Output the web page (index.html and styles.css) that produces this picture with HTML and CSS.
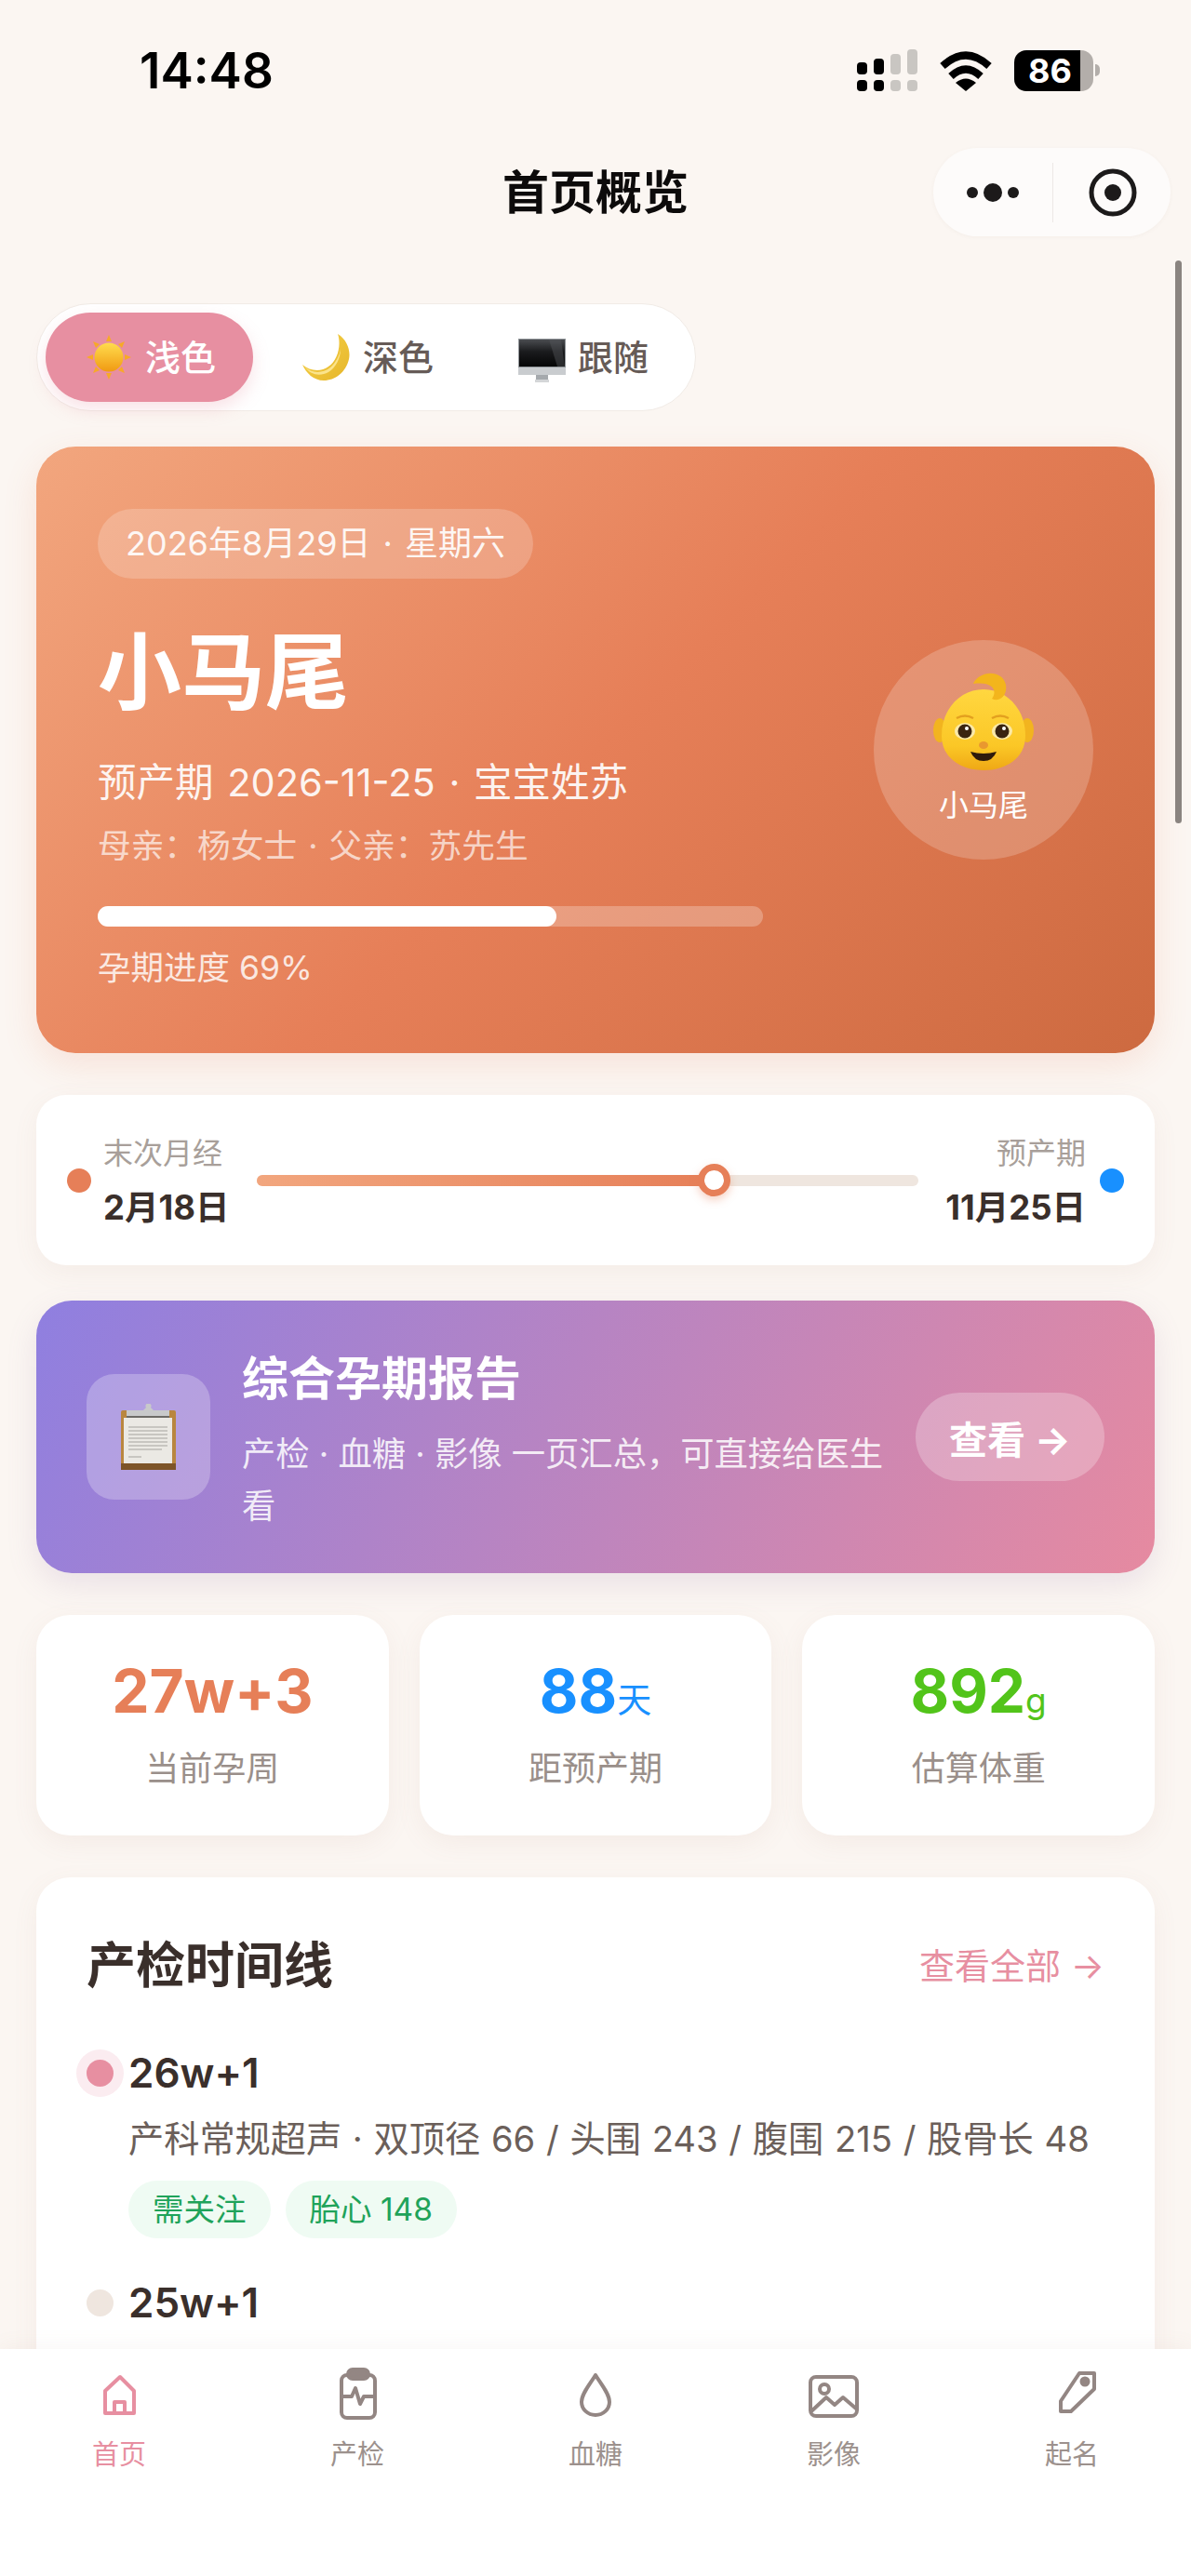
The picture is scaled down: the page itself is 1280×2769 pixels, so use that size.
FILE: index.html
```html
<!DOCTYPE html>
<html lang="zh-CN">
<head>
<meta charset="utf-8">
<title>首页概览</title>
<link rel="stylesheet" href="styles.css">
</head>
<body>
<div class="phone">
  <header class="status">
    <span class="time">14:48</span>
    <div class="status-icons">
      <svg class="cell" viewBox="0 0 65 45" width="65" height="45">
        <g class="on"><rect x="0" y="14" width="11" height="13" rx="4"/><rect x="18" y="10" width="11" height="17" rx="4"/><rect x="0" y="33" width="11" height="12" rx="4"/><rect x="18" y="33" width="11" height="12" rx="4"/></g>
        <g class="off"><rect x="36" y="5" width="11" height="22" rx="4"/><rect x="54" y="0" width="11" height="27" rx="4"/><rect x="36" y="33" width="11" height="12" rx="4"/><rect x="54" y="33" width="11" height="12" rx="4"/></g>
      </svg>
      <svg class="wifi" viewBox="0 0 58 44" width="58" height="44">
        <path class="wifi-arc" d="M4 17Q29 -6 54 17"/>
        <path class="wifi-arc" d="M13 28Q29 13 45 28"/>
        <path class="wifi-dot" d="M18 35Q29 26 40 35L29 44Z"/>
      </svg>
      <div class="battery"><span class="battery-num">86</span></div>
      <span class="battery-nub"></span>
    </div>
  </header>

  <nav class="nav">
    <h1 class="nav-title">首页概览</h1>
    <div class="capsule">
      <svg class="cap-more" viewBox="0 0 58 24" width="58" height="24"><circle cx="6" cy="12" r="6"/><circle cx="28" cy="12" r="10"/><circle cx="50" cy="12" r="6"/></svg>
      <span class="cap-line"></span>
      <svg class="cap-target" viewBox="0 0 52 52" width="52" height="52"><circle class="ring" cx="26" cy="26" r="23"/><circle cx="26" cy="26" r="9"/></svg>
    </div>
  </nav>

  <main class="main">
    <div class="toggle">
      <div class="toggle-item active">
        <svg class="emoji" viewBox="0 0 50 50" width="50" height="50">
          <defs><linearGradient id="sunG" x1="0" y1="0" x2="0" y2="1"><stop offset="0" stop-color="#ffdc4e"/><stop offset="1" stop-color="#f09a12"/></linearGradient></defs>
          <g class="sun-rays"><path d="M25 1l3 7h-6z"/><path d="M25 49l3-7h-6z"/><path d="M1 25l7-3v6z"/><path d="M49 25l-7-3v6z"/><path d="M8 8l7 3-4 4z"/><path d="M42 8l-7 3 4 4z"/><path d="M8 42l7-3-4-4z"/><path d="M42 42l-7-3 4-4z"/></g>
          <circle cx="25" cy="25" r="15.500" fill="url(#sunG)"/>
        </svg>
        <span>浅色</span>
      </div>
      <div class="toggle-item">
        <svg class="emoji" viewBox="0 0 51 50" width="51" height="50">
          <defs><linearGradient id="moonG" x1="0" y1="0" x2="1" y2="1"><stop offset="0" stop-color="#f6d24a"/><stop offset="1" stop-color="#e6b62a"/></linearGradient></defs>
          <path d="M38 0C48 6 52 18 50 27 47 41 35 50 23 50 12 50 4 42 0 33 8 40 20 41 28 35 38 28 42 12 38 0Z" fill="url(#moonG)"/>
          <path d="M3 36C10 42 21 43 30 36 36 31 40 23 41 16 41 26 36 36 28 41 19 46 9 44 3 36Z" fill="#fbe48c"/>
        </svg>
        <span>深色</span>
      </div>
      <div class="toggle-item">
        <svg class="emoji monitor" viewBox="0 0 51 47" width="51" height="47">
          <defs><linearGradient id="scrG" x1="0" y1="0" x2="0" y2="1"><stop offset="0" stop-color="#4a4c50"/><stop offset="0.450" stop-color="#1a1b1d"/><stop offset="1" stop-color="#050505"/></linearGradient></defs>
          <rect x="0" y="0" width="51" height="31" fill="#8f9397"/>
          <rect x="1" y="1" width="49" height="29" fill="url(#scrG)"/>
          <path d="M33 1H46L50 30H42Z" fill="#54565a" opacity=".45"/>
          <rect x="0" y="31" width="51" height="8" fill="#c9cccf"/>
          <rect x="19" y="39" width="13" height="5" fill="#a5a9ad"/>
          <rect x="18" y="44" width="15" height="3" fill="#d4d6d8"/>
        </svg>
        <span>跟随</span>
      </div>
    </div>

    <section class="hero">
      <div class="hero-left">
        <div class="date-pill">2026年8月29日 · 星期六</div>
        <div class="hero-name">小马尾</div>
        <div class="hero-due">预产期 2026-11-25 · 宝宝姓苏</div>
        <div class="hero-parents">母亲：杨女士 · 父亲：苏先生</div>
        <div class="hero-bar"><div class="hero-fill"></div></div>
        <div class="hero-progress">孕期进度 69%</div>
      </div>
      <div class="avatar">
        <svg class="baby" viewBox="0 0 108 106" width="108" height="106">
          <defs>
            <linearGradient id="babyG" x1="0" y1="0" x2="0" y2="1"><stop offset="0" stop-color="#ffd740"/><stop offset="0.700" stop-color="#fbc726"/><stop offset="1" stop-color="#efa815"/></linearGradient>
          </defs>
          <ellipse cx="7" cy="62" rx="7" ry="13" fill="#f2b41f"/>
          <ellipse cx="101" cy="62" rx="7" ry="13" fill="#f2b41f"/>
          <path d="M54 18C78 18 99 38 99 68 99 92 78 105 54 105 30 105 9 92 9 68 9 38 30 18 54 18Z" fill="url(#babyG)"/>
          <path d="M43 12C49 -2 74 -4 78 13 80 26 70 32 63 28 69 20 65 9 43 12Z" fill="#f3b51c"/>
          <path d="M25 49q9-5 18 0M63 49q9-5 18 0" class="baby-brow"/>
          <ellipse cx="34" cy="63" rx="11" ry="9" fill="#fbe9a8"/>
          <ellipse cx="74" cy="63" rx="11" ry="9" fill="#fbe9a8"/>
          <circle cx="34" cy="63" r="7.500" fill="#3a2410"/>
          <circle cx="74" cy="63" r="7.500" fill="#3a2410"/>
          <circle cx="36" cy="60" r="2" fill="#fff"/>
          <circle cx="76" cy="60" r="2" fill="#fff"/>
          <ellipse cx="54" cy="78" rx="5" ry="4" fill="#e9982f"/>
          <path d="M40 85Q54 89 68 85 64 95 54 95 44 95 40 85Z" fill="#2f1a0c"/>
        </svg>
        <span class="avatar-name">小马尾</span>
      </div>
    </section>

    <section class="span-card">
      <i class="dot dot-start"></i>
      <div class="span-label">
        <span class="span-cap">末次月经</span>
        <b class="span-date">2月18日</b>
      </div>
      <div class="track"><div class="track-fill"></div><span class="thumb"></span></div>
      <div class="span-label end">
        <span class="span-cap">预产期</span>
        <b class="span-date">11月25日</b>
      </div>
      <i class="dot dot-end"></i>
    </section>

    <section class="report">
      <div class="report-icon">
        <svg viewBox="0 0 62 72" width="62" height="72">
          <rect x="1" y="7" width="59" height="64" rx="2" fill="#b9863f"/>
          <rect x="4" y="15" width="52" height="49" fill="#ebe9e4"/>
          <path d="M9 25h42M9 29h42M9 33h42M9 37h42M9 41h42M9 45h42M9 49h36M9 57h14" class="clip-lines"/>
          <rect x="1" y="64" width="59" height="7" fill="#7d5428"/>
          <rect x="7" y="7" width="46" height="6" fill="#c8c9ca"/>
          <rect x="7" y="13" width="46" height="2" fill="#6c6a66"/>
          <path d="M24 8L28 4a3 3 0 1 1 5 0L37 8Z" fill="#c8c9ca"/>
        </svg>
      </div>
      <div class="report-text">
        <h2 class="report-title">综合孕期报告</h2>
        <p class="report-sub">产检 · 血糖 · 影像 一页汇总，可直接给医生看</p>
      </div>
      <div class="report-btn">查看 →</div>
    </section>

    <section class="stats">
      <div class="stat"><div class="stat-val orange">27w+3</div><div class="stat-label">当前孕周</div></div>
      <div class="stat"><div class="stat-val blue">88<small>天</small></div><div class="stat-label">距预产期</div></div>
      <div class="stat"><div class="stat-val green">892<small>g</small></div><div class="stat-label">估算体重</div></div>
    </section>

    <section class="visits">
      <div class="visits-head">
        <h2 class="visits-title">产检时间线</h2>
        <span class="visits-more">查看全部 →</span>
      </div>
      <div class="visit">
        <div class="visit-top"><i class="visit-dot current"></i><b class="visit-week">26w+1</b></div>
        <p class="visit-desc">产科常规超声 · 双顶径 66 / 头围 243 / 腹围 215 / 股骨长 48</p>
        <div class="tags"><span class="tag">需关注</span><span class="tag">胎心 148</span></div>
      </div>
      <div class="visit second">
        <div class="visit-top"><i class="visit-dot"></i><b class="visit-week">25w+1</b></div>
      </div>
    </section>
  </main>

  <div class="scrollbar"></div>

  <footer class="tabbar">
    <div class="tab active">
      <svg viewBox="0 0 60 60" width="60" height="60"><path d="M15 50V26L31 11l15 15v24zM25 50V38h11v12"/></svg>
      <span>首页</span>
    </div>
    <div class="tab">
      <svg viewBox="0 0 60 60" width="60" height="60"><rect x="13" y="9" width="36" height="46" rx="6"/><rect class="solid" x="20" y="3" width="22" height="10" rx="5"/><path d="M14 32h10l4-9 5 17 4-8h11"/></svg>
      <span>产检</span>
    </div>
    <div class="tab">
      <svg viewBox="0 0 60 60" width="60" height="60"><path d="M30 9C24 19 15 29 15 38a15 14 0 0 0 30 0C45 29 36 19 30 9Z"/></svg>
      <span>血糖</span>
    </div>
    <div class="tab">
      <svg viewBox="0 0 60 60" width="60" height="60"><rect x="5" y="11" width="50" height="42" rx="6"/><circle cx="20" cy="24" r="5"/><path d="M7 47l15-14 9 8 9-8 14 12"/></svg>
      <span>影像</span>
    </div>
    <div class="tab">
      <svg viewBox="0 0 60 60" width="60" height="60"><path d="M38 7H54V24L29 48H18V37Z"/><circle class="solid" cx="44" cy="16" r="3.500"/></svg>
      <span>起名</span>
    </div>
  </footer>
</div>
</body>
</html>
```

FILE: styles.css
```css
* { box-sizing: border-box; margin: 0; padding: 0; }
html, body { width: 1280px; height: 2769px; overflow: hidden; }
body {
  background: #fbf6f2;
  color: #3a2f2b;
  font-family: Inter, "Noto Sans CJK SC", sans-serif;
}
.phone { position: relative; width: 1280px; height: 2769px; overflow: hidden; display: flex; flex-direction: column; }

/* status bar */
.status { height: 152px; padding: 53px 0 0 150px; display: flex; justify-content: space-between; align-items: flex-start; flex: none; }
.time { font-size: 53px; line-height: 46px; font-weight: 600; color: #000; }
.status-icons { display: flex; align-items: center; margin-right: 98px; }
.cell .on { fill: #000; }
.cell .off { fill: #c9c6c2; }
.wifi { margin-left: 23px; }
.wifi-arc { fill: none; stroke: #000; stroke-width: 8; }
.wifi-dot { fill: #000; }
.battery {
  width: 85px; height: 44px; margin-left: 23px; border-radius: 13px;
  background: linear-gradient(90deg, #000 0 84%, #b3aeaa 84% 100%);
  color: #fff; font-size: 36px; font-weight: 700; line-height: 44px; padding-left: 15px;
}
.battery-nub { width: 5px; height: 13px; margin-left: 2px; background: #b3aeaa; border-radius: 0 6px 6px 0; }

/* nav */
.nav { position: relative; height: 110px; flex: none; display: flex; align-items: center; justify-content: center; }
.nav-title { font-size: 50px; font-weight: 700; color: #0d0b0b; line-height: 60px; }
.capsule {
  position: absolute; left: 1003px; top: 7px; width: 255px; height: 95px; border-radius: 48px;
  background: #fdfbfa; box-shadow: 0 1px 4px rgba(120, 90, 70, .05);
  display: flex; align-items: center; padding-left: 36px;
}
.cap-more { fill: #1c1a1a; }
.cap-line { width: 1px; height: 64px; margin-left: 34px; background: #ece8e5; }
.cap-target { margin-left: 38px; fill: #1c1a1a; }
.cap-target .ring { fill: none; stroke: #1c1a1a; stroke-width: 5; }

/* main */
.main { flex: 1; min-height: 0; padding: 64px 39px 0; display: flex; flex-direction: column; }

.toggle {
  align-self: flex-start; width: 709px; height: 116px; border-radius: 58px; padding: 9px;
  background: #fff; border: 1px solid #f1ebe6; display: flex; align-items: center; flex: none;
}
.toggle-item {
  height: 96px; width: 230px; border-radius: 48px; display: flex; align-items: center; gap: 14px;
  font-size: 38px; font-weight: 500; color: #665b57; padding-left: 53px; flex: none;
}
.toggle-item span { margin-bottom: 6px; }
.toggle-item.active { width: 223px; color: #fff; background: #e78fa1; box-shadow: 0 8px 18px rgba(231, 143, 161, .25); padding-left: 43px; }
.emoji { flex: none; }
.monitor { margin-top: 7px; }
.sun-rays { fill: #f7a928; }
.toggle-item:last-child { gap: 13px; padding-left: 55px; }

/* hero */
.hero {
  margin-top: 38px; height: 652px; border-radius: 42px; padding: 66px 66px; flex: none;
  display: flex; justify-content: space-between; align-items: center; color: #fff;
  background: linear-gradient(135deg, #f2a67e 0%, #e67f58 50%, #cd6a40 100%);
  box-shadow: 0 12px 36px rgba(230, 127, 88, .16);
}
.hero-left { width: 715px; }
.date-pill {
  display: inline-block; height: 75px; line-height: 75px; padding: 0 30px; border-radius: 38px;
  background: rgba(255, 255, 255, .2); font-size: 36px; word-spacing: 3px; color: rgba(255, 255, 255, .92);
}
.hero-name { margin-top: 51px; font-size: 90px; line-height: 100px; font-weight: 700; }
.hero-due { margin-top: 40px; font-size: 41.500px; word-spacing: 3px; line-height: 56px; color: rgba(255, 255, 255, .92); }
.hero-parents { margin-top: 16px; font-size: 35.700px; word-spacing: 2px; line-height: 48px; color: rgba(255, 255, 255, .68); }
.hero-bar { margin-top: 41px; height: 22px; border-radius: 11px; background: rgba(255, 255, 255, .26); }
.hero-fill { width: 69%; height: 100%; border-radius: 11px; background: #fff; }
.hero-progress { margin-top: 21px; font-size: 35.500px; line-height: 48px; color: rgba(255, 255, 255, .82); }
.avatar {
  width: 236px; height: 236px; border-radius: 50%; background: rgba(255, 255, 255, .2); flex: none;
  display: flex; flex-direction: column; align-items: center; padding-top: 35px;
}
.baby-brow { fill: none; stroke: #e3a01f; stroke-width: 2.500; }
.avatar-name { margin-top: 15px; font-size: 32px; line-height: 44px; color: #fff; }

/* span card */
.span-card {
  margin-top: 45px; height: 183px; border-radius: 32px; background: #fff; padding: 0 33px; flex: none;
  display: flex; align-items: center; box-shadow: 0 8px 28px rgba(160, 120, 100, .07);
}
.dot { width: 26px; height: 26px; border-radius: 50%; flex: none; }
.dot-start { background: #e67f58; }
.dot-end { background: #1890ff; }
.span-label { margin-left: 13px; display: flex; flex-direction: column; gap: 8px; flex: none; }
.span-label.end { margin: 0 15px 0 0; align-items: flex-end; }
.span-cap { font-size: 32px; line-height: 50px; color: #a89f9a; }
.span-date { font-size: 36.500px; line-height: 50px; font-weight: 700; color: #3a2f2b; }
.track { position: relative; flex: 1; height: 12px; margin: 0 29px 0 29px; border-radius: 6px; background: #efe6df; }
.track-fill { width: 69%; height: 100%; border-radius: 6px; background: linear-gradient(90deg, #f2a67e, #e67f58); }
.thumb {
  position: absolute; left: 69%; top: 50%; width: 35px; height: 35px; margin: -18px 0 0 -17px;
  border-radius: 50%; background: #fff; border: 7px solid #e67f58; box-shadow: 0 4px 10px rgba(230, 127, 88, .35);
}

/* report */
.report {
  margin-top: 38px; height: 293px; border-radius: 38px; padding: 0 54px 0 54px; flex: none; color: #fff;
  display: flex; align-items: center;
  background: linear-gradient(118deg, #8f7fe0 0%, #e68aa0 100%);
  box-shadow: 0 12px 32px rgba(150, 120, 170, .16);
}
.report-icon {
  width: 133px; height: 135px; border-radius: 30px; background: rgba(255, 255, 255, .25); flex: none;
  display: flex; align-items: center; justify-content: center;
}
.clip-lines { stroke: #bdbab5; stroke-width: 1.500; fill: none; }
.report-text { width: 697px; margin-left: 34px; padding-top: 5px; flex: none; }
.report-title { font-size: 50px; line-height: 70px; font-weight: 700; }
.report-sub { margin-top: 18px; font-size: 36.300px; line-height: 56px; color: rgba(255, 255, 255, .86); }
.report-btn {
  margin-left: auto; width: 203px; height: 95px; border-radius: 48px; background: rgba(255, 255, 255, .25);
  display: flex; align-items: center; justify-content: center; font-size: 41px; font-weight: 700; flex: none;
}

/* stats */
.stats { margin-top: 45px; height: 237px; display: grid; grid-template-columns: repeat(3, 1fr); gap: 33px; flex: none; }
.stat { background: #fff; border-radius: 36px; text-align: center; padding-top: 44px; box-shadow: 0 8px 28px rgba(160, 120, 100, .08); }
.stat-val { height: 76px; font-size: 64px; line-height: 76px; font-weight: 700; }
.stat-val small { font-size: 37px; font-weight: 400; line-height: 0; }
.stat-label { margin-top: 21px; font-size: 36px; line-height: 48px; color: #9a8f8a; }
.orange { color: #e67f58; }
.blue { color: #1890ff; }
.green { color: #52c41a; }

/* visits */
.visits { margin-top: 45px; flex: 1; min-height: 0; background: #fff; border-radius: 36px 36px 0 0; padding: 60px 54px 0; box-shadow: 0 8px 28px rgba(160, 120, 100, .07); }
.visits-head { display: flex; justify-content: space-between; align-items: center; height: 70px; }
.visits-title { font-size: 53px; line-height: 70px; font-weight: 700; color: #3a2f2b; }
.visits-more { margin-top: -5px; font-size: 38px; color: #e78fa1; }
.visit { margin-top: 50px; }
.visit.second { margin-top: 39px; }
.visit-top { display: flex; align-items: center; height: 60px; }
.visit-dot { width: 29px; height: 29px; margin-right: 16px; border-radius: 50%; background: #efe6df; flex: none; }
.visit-dot.current { background: #e78fa1; box-shadow: 0 0 0 11px #fbecf0; }
.visit-week { font-size: 44px; line-height: 60px; font-weight: 600; color: #3a2f2b; }
.visit-desc { margin: 13px 0 0 45px; font-size: 38.200px; word-spacing: 1px; line-height: 56px; color: #6b5f5a; white-space: nowrap; }
.tags { display: flex; gap: 16px; margin: 17px 0 0 45px; }
.tag { height: 62px; line-height: 62px; padding: 0 26px; border-radius: 31px; background: #effbf3; color: #1fa35a; font-size: 33.500px; }

/* overlays */
.scrollbar { position: absolute; left: 1263px; top: 280px; width: 7px; height: 605px; border-radius: 4px; background: #8a8480; }
.tabbar {
  position: absolute; left: 0; right: 0; bottom: 0; height: 244px; padding-top: 19px; background: #fff;
  display: grid; grid-template-columns: repeat(5, 1fr); box-shadow: 0 -4px 20px rgba(160, 120, 100, .06);
}
.tab { display: flex; flex-direction: column; align-items: center; color: #9c918d; font-size: 29px; line-height: 40px; }
.tab span { margin-top: 15px; }
.tab svg { fill: none; stroke: #938683; stroke-width: 4; stroke-linejoin: round; stroke-linecap: round; }
.tab svg .solid { fill: #938683; }
.tab.active { color: #e78fa1; }
.tab.active svg { stroke: #e78fa1; }
```
